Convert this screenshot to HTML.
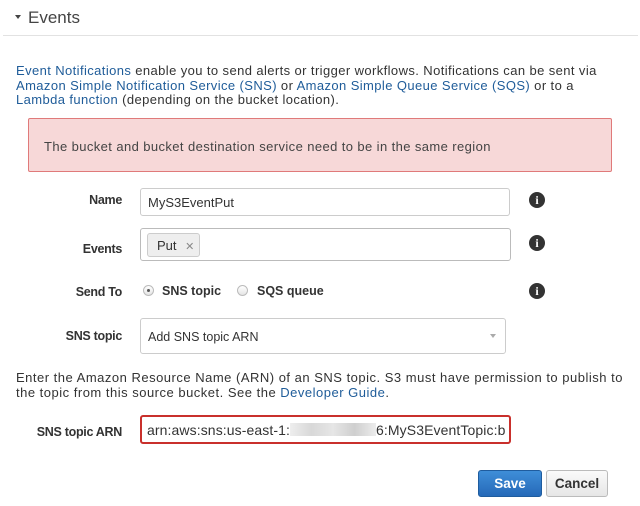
<!DOCTYPE html>
<html><head><style>
body{margin:0;width:640px;height:506px;background:#fff;font-family:"Liberation Sans",Arial,sans-serif;color:#333;position:relative;overflow:hidden}
.a{position:absolute}
a{color:#1f5c99;text-decoration:none}
.lbl{position:absolute;font-weight:bold;font-size:12.5px;color:#333;text-align:right;right:518px;letter-spacing:-0.3px}
.inp{position:absolute;border:1px solid #ccc;border-radius:3px;background:#fff;box-sizing:border-box;font-size:12px;color:#333}
.info{position:absolute;width:16px;height:16px;border-radius:50%;background:#333;color:#fff;font-weight:bold;font-size:12px;text-align:center;line-height:16px;font-family:"Liberation Serif",serif}
.radio{position:absolute;width:11px;height:11px;border-radius:50%;border:1px solid #bbb;background:linear-gradient(#fff,#e4e4e4);box-sizing:border-box}
</style></head><body>
<div class="a" style="left:15px;top:15px;width:0;height:0;border-left:3.5px solid transparent;border-right:3.5px solid transparent;border-top:4px solid #444"></div>
<div class="a" style="left:28px;top:8px;font-size:17px;color:#444">Events</div>
<div class="a" style="left:3px;top:35px;width:635px;height:1px;background:#e2e2e2"></div>
<div class="a" style="left:16px;top:64px;white-space:nowrap;font-size:13px;letter-spacing:0.4px;line-height:14.5px;color:#333"><a>Event Notifications</a> enable you to send alerts or trigger workflows. Notifications can be sent via<br><a>Amazon Simple Notification Service (SNS)</a> or <a>Amazon Simple Queue Service (SQS)</a> or to a<br><a>Lambda function</a> (depending on the bucket location).</div>
<div class="a" style="left:28px;top:118px;width:584px;height:54px;box-sizing:border-box;background:#f7d8d8;border:1px solid #e07a7a;border-radius:2px"></div>
<div class="a" style="left:44px;top:139px;font-size:13px;letter-spacing:0.4px;color:#444">The bucket and bucket destination service need to be in the same region</div>

<div class="lbl" style="top:193px">Name</div>
<div class="inp" style="left:140px;top:188px;width:370px;height:28px;padding:6px 0 0 7px;font-size:13px">MyS3EventPut</div>
<div class="info" style="left:529px;top:192px">i</div>

<div class="lbl" style="top:242px">Events</div>
<div class="inp" style="left:140px;top:228px;width:371px;height:33px;border-color:#bbb"></div>
<div class="a" style="left:147px;top:233px;width:53px;height:24px;box-sizing:border-box;border:1px solid #ccc;border-radius:3px;background:#eee;font-size:13px;padding:4px 0 0 9px;white-space:nowrap">Put <span style="color:#888;font-size:11px;margin-left:5px">✕</span></div>
<div class="info" style="left:529px;top:235px">i</div>

<div class="lbl" style="top:285px">Send To</div>
<div class="radio" style="left:143px;top:285px"><div style="width:3px;height:3px;border-radius:50%;background:#555;margin:3px"></div></div>
<div class="a" style="left:162px;top:284px;font-size:12.5px;font-weight:bold">SNS topic</div>
<div class="radio" style="left:237px;top:285px"></div>
<div class="a" style="left:257px;top:284px;font-size:12.5px;font-weight:bold">SQS queue</div>
<div class="info" style="left:529px;top:283px">i</div>

<div class="lbl" style="top:329px">SNS topic</div>
<div class="inp" style="left:140px;top:318px;width:366px;height:36px;padding:11px 0 0 7px;font-size:12.5px">Add SNS topic ARN</div>
<div class="a" style="left:490px;top:334px;width:0;height:0;border-left:3px solid transparent;border-right:3px solid transparent;border-top:4px solid #aaa"></div>

<div class="a" style="left:16px;top:370px;white-space:nowrap;font-size:13px;letter-spacing:0.5px;line-height:15px;color:#333">Enter the Amazon Resource Name (ARN) of an SNS topic. S3 must have permission to publish to<br>the topic from this source bucket. See the <a>Developer Guide</a>.</div>

<div class="lbl" style="top:425px">SNS topic ARN</div>
<div class="inp" style="left:140px;top:415px;width:371px;height:29px;border:2px solid #c9302c;padding:5px 0 0 5px;overflow:hidden;white-space:nowrap;font-size:14px;letter-spacing:0.1px">arn:aws:sns:us-east-1:<span style="display:inline-block;width:86px;height:13px;background:linear-gradient(90deg,#eee,#d8d8d8,#e6e6e6,#cfcfcf,#ececec);vertical-align:-1px"></span>6:MyS3EventTopic:b</div>

<div class="a" style="left:478px;top:470px;width:64px;height:27px;box-sizing:border-box;background:linear-gradient(#3f8ed8,#2569b8);border:1px solid #1f5c9e;border-radius:3px;color:#fff;font-weight:bold;font-size:13.5px;text-align:center;line-height:25px">Save</div>
<div class="a" style="left:546px;top:470px;width:62px;height:27px;box-sizing:border-box;background:linear-gradient(#fafafa,#e6e6e6);border:1px solid #bbb;border-radius:3px;color:#333;font-weight:bold;font-size:13.5px;text-align:center;line-height:25px">Cancel</div>
</body></html>
